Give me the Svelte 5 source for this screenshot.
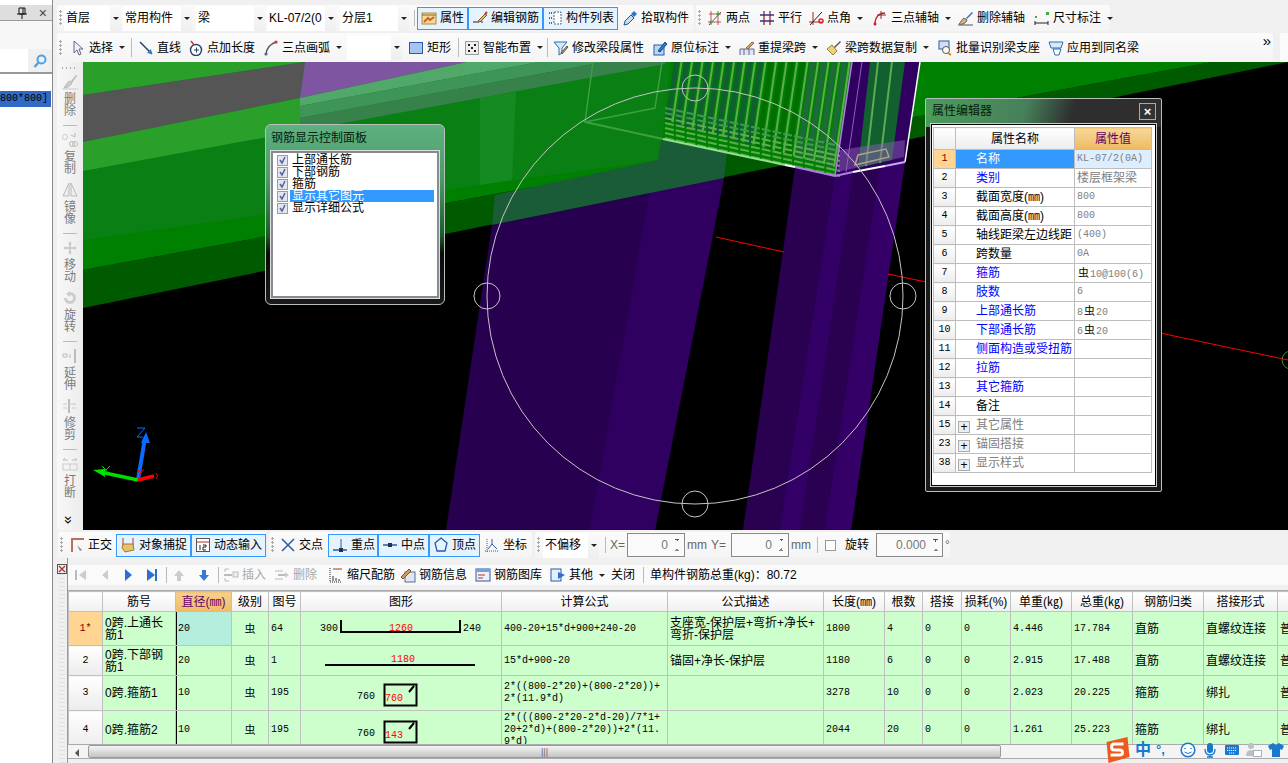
<script>
  const I = {
    attr: '<rect x="1" y="3" width="14" height="11" fill="#f3d99a" stroke="#b08a3c"/><path d="M1 5h14" stroke="#8a6a2a"/><path d="M3 12l4-4 2 2 4-3" stroke="#c8641e" stroke-width="2"/>',
    edit: '<path d="M1 12h6M9 12h2" stroke="#222"/><path d="M6 11l7-7 2 1-7 7z" fill="#e9b26a" stroke="#8a5a2a"/><path d="M13 4l2-2" stroke="#c33" stroke-width="2"/>',
    list: '<path d="M2 3h3M2 8h3M2 13h3" stroke="#567" stroke-width="2" stroke-dasharray="1 1"/><rect x="7" y="2" width="7" height="12" fill="#fff" stroke="#567" stroke-dasharray="2 1"/>',
    pick: '<path d="M2 15l1-4 6-6 3 3-6 6z" fill="#cde" stroke="#258"/><path d="M9 4l3-3 3 3-3 3z" fill="#2a78c8"/>',
    two: '<path d="M2 4h12M1 12h13M4 1v14M11 1v14" stroke="#a33" stroke-width=".8"/><path d="M2 15L14 2" stroke="#555"/><circle cx="4" cy="12" r="1.6" fill="#4a3"/><circle cx="11" cy="4" r="1.6" fill="#4a3"/>',
    para: '<path d="M5 1v14M11 1v14" stroke="#a22" stroke-width="1.3"/><path d="M1 5h14M1 11h14" stroke="#338" stroke-width="1.3"/>',
    angle: '<path d="M1 12h14M5 2v13" stroke="#a22"/><path d="M2 15L14 2" stroke="#222"/><circle cx="13" cy="11" r="2" fill="none" stroke="#d22" stroke-width="1.5"/>',
    arc3: '<path d="M3 14C3 7 7 3 13 3" fill="none" stroke="#c22" stroke-width="1.4"/><path d="M9 1v8M5 5h9" stroke="#833"/><circle cx="3" cy="14" r="1.5" fill="#c22"/>',
    brush: '<path d="M1 14c4 1 7-1 8-4l-3-2c-2 1-3 4-5 6z" fill="#d8b078" stroke="#665"/><path d="M8 8l6-6 1 1-6 6z" fill="#3a6fb0"/><path d="M0 15h15" stroke="#555"/>',
    dim: '<path d="M1 11v4M14 11v4M1 13h13" stroke="#222"/><rect x="1" y="6" width="2" height="2" fill="#4a4"/><rect x="12" y="2" width="3" height="3" fill="#4a4"/>',
    cursor: '<path d="M4 1v12l3-3 2 5 2-1-2-5h4z" fill="#eef" stroke="#668"/>',
    line: '<path d="M2 2l12 12" stroke="#246" stroke-width="1.5"/><path d="M14 14l-5-1 4-4z" fill="#2a78c8"/>',
    plus: '<circle cx="8" cy="10" r="5.5" fill="#fff" stroke="#246" stroke-width="1.4"/><path d="M6 10h5M8.5 7.5v5" stroke="#246"/><path d="M3 1l3 4" stroke="#c33" stroke-width="1.4"/>',
    arc: '<path d="M3 15C3 9 7 4 13 2" fill="none" stroke="#555" stroke-width="1.6"/><circle cx="3" cy="14" r="1.6" fill="#3a6fb0"/><circle cx="13" cy="2" r="1.6" fill="#c33"/>',
    rect: '<rect x="1.5" y="2.5" width="13" height="11" fill="#a8c4ee" stroke="#2a5aa8"/>',
    smart: '<rect x="1.5" y="1.5" width="13" height="13" fill="#eee" stroke="#444" stroke-dasharray="1 1"/><path d="M4 4h2v2H4zM10 4h2v2h-2zM4 10h2v2H4zM10 10h2v2h-2zM7 7h2v2H7z" fill="#222"/>',
    filter: '<path d="M1 2h13L9 8v5l-3 2V8z" fill="#d8eafa" stroke="#2a6fb0"/><path d="M8 13l6-7 1 1-6 7z" fill="#d8a050" stroke="#654"/>',
    doc: '<rect x="2" y="5" width="10" height="10" fill="#bcd6f4" stroke="#2a5aa8"/><path d="M6 11l7-9 2 2-7 8z" fill="#2a78c8" stroke="#158"/>',
    rail: '<path d="M1 15V9h14v6M5 15V9M10 15V9" fill="#dce6f4" stroke="#668"/><path d="M7 8l6-6 2 1-6 6z" fill="#e0a860" stroke="#865"/>',
    broom: '<path d="M1 9l5-4 5 6-4 4z" fill="#ecd27a" stroke="#9a8030"/><path d="M8 7l6-6 1 1-6 6z" fill="#555"/>',
    mag: '<rect x="2" y="1" width="10" height="8" fill="#cfe0f4" stroke="#2a5aa8"/><circle cx="9" cy="10" r="3.5" fill="#fff" stroke="#555"/><path d="M11 13l3 2" stroke="#c80" stroke-width="2"/>',
    app: '<path d="M1 2h14l-2 6H3z" fill="#d8eafa" stroke="#2a6fb0"/><path d="M5 9h8l-2 6H7z" fill="#fff" stroke="#2a6fb0"/>',
    ortho: '<path d="M3 15V2h12" fill="none" stroke="#b87060" stroke-width="2"/><path d="M8 8l5 5-2 1z" fill="#889"/>',
    snap: '<path d="M3 1v7M13 1v7" stroke="#a33"/><path d="M3 7l10 0 1 6-9 2-3-4z" fill="#e8c070" stroke="#a07a30"/>',
    dyn: '<rect x="1.5" y="1.5" width="13" height="13" fill="#fff" stroke="#555"/><path d="M1 5h14" stroke="#a33"/><path d="M5 8v5M8 8h3v2H8v3h3" fill="none" stroke="#222"/>',
    cross: '<path d="M2 2l12 12M14 2L2 14" stroke="#2a5aa8" stroke-width="1.5"/>',
    perp: '<path d="M1 13h14" stroke="#2a5aa8" stroke-width="1.5"/><path d="M9 2v11" stroke="#2a5aa8"/><rect x="7" y="11" width="4" height="4" fill="#234"/>',
    mid: '<path d="M1 8h14" stroke="#2a5aa8" stroke-width="1.5"/><rect x="6" y="6" width="4" height="4" fill="#234"/>',
    vertex: '<path d="M8 1l6 5-2 8H4L2 6z" fill="#e5f3ff" stroke="#2a5aa8" stroke-width="1.3"/>',
    coord: '<path d="M1 14h14M3 15V2" stroke="#2a5aa8" stroke-dasharray="1 1"/><path d="M4 12l4-5 5 5M8 7V2" fill="none" stroke="#2a5aa8"/>',
    first: '<path d="M3 3v10" stroke="#bbb" stroke-width="2"/><path d="M13 3v10L6 8z" fill="#ccc"/>',
    prev: '<path d="M11 3v10L5 8z" fill="#ccc"/>',
    next: '<path d="M5 2v12l7-6z" fill="#2a6fd0"/>',
    last: '<path d="M3 2v12l8-6z" fill="#2a6fd0"/><path d="M12 2v12" stroke="#2a6fd0" stroke-width="2"/>',
    up: '<path d="M8 3l5 6h-3v5H6V9H3z" fill="#ccc"/>',
    down: '<path d="M8 14l5-6h-3V3H6v5H3z" fill="#3a78d8"/>',
    ins: '<path d="M2 2h4M2 14h4M2 2v3M2 14v-3" stroke="#bbb"/><path d="M1 8h8" stroke="#bbb" stroke-width="2"/><rect x="10" y="5" width="5" height="5" fill="#eee" stroke="#bbb"/>',
    del: '<path d="M1 4h8M1 12h8" stroke="#bbb"/><path d="M4 8h7" stroke="#bbb" stroke-width="2"/><path d="M11 5l4 3-4 3z" fill="#ccc"/>',
    scale: '<path d="M2 1v14h12" fill="none" stroke="#222" stroke-dasharray="1 1"/><path d="M5 14V9M8 14V11M11 14v-2" stroke="#333"/><path d="M5 2h9" stroke="#a33"/>',
    info: '<rect x="5" y="5" width="10" height="10" fill="#dde8f6" stroke="#668"/><path d="M1 10l8-8 2 2-8 8z" fill="#d89a50" stroke="#754"/>',
    lib: '<rect x="1" y="2" width="14" height="12" fill="#eef2f8" stroke="#2a5aa8"/><rect x="1" y="2" width="14" height="3" fill="#7aa0d8"/><path d="M3 8h7M3 11h5" stroke="#a33"/>',
    other: '<rect x="1" y="2" width="10" height="12" fill="#e8eef8" stroke="#2a5aa8"/><path d="M8 5l7 3-7 4z" fill="#2a6fd0"/>',
    erase: '<path d="M2 14c4 0 6-2 8-5l-2-2c-3 1-4 4-6 7z" fill="#ccc" stroke="#bbb"/><path d="M9 7l5-6 1 1-5 7z" fill="#bbb"/><path d="M0 15h16" stroke="#ccc"/>',
    copy: '<circle cx="3" cy="5" r="2.5" fill="none" stroke="#ccc"/><circle cx="10" cy="12" r="2.5" fill="none" stroke="#bbb"/><circle cx="13" cy="12" r="2.5" fill="none" stroke="#bbb"/><path d="M9 3l4 2M13 1v4" stroke="#bbb"/>',
    mirror: '<path d="M7 1L1 14h6zM9 1l6 13H9z" fill="#eee" stroke="#bbb"/>',
    move: '<path d="M8 1l2 3H9v3h3V6l3 2-3 2V9H9v3h1l-2 3-2-3h1V9H4v1L1 8l3-2v1h3V4H6z" fill="#ccc"/>',
    rotate: '<path d="M8 2a6 6 0 1 1-6 6h3a3 3 0 1 0 3-3v2L4 4l4-3z" fill="#ccc"/>',
    extend: '<path d="M13 1v14" stroke="#bbb" stroke-width="2"/><path d="M1 6h4v3H1zM7 7h2M7 9h2" fill="none" stroke="#bbb"/>',
    trim: '<path d="M7 1v14" stroke="#bbb" stroke-width="2"/><path d="M1 6h12M1 10h5M10 6h5M10 10h5" stroke="#ccc" stroke-dasharray="4 1"/>',
    cut: '<path d="M1 4h5M15 4h-5M1 4l2-2M15 4l-2-2" stroke="#bbb"/><rect x="1" y="8" width="14" height="6" fill="none" stroke="#ccc"/><path d="M8 8v6" stroke="#ccc"/>'
  };

  const row1a = [
    { sel: '首层', w: 59, box: 46 }, { sel: '常用构件', w: 73, box: 58 }, { sel: '梁', w: 71, box: 58 },
    { sel: 'KL-07/2(0', w: 73, box: 58 }, { sel: '分层1', w: 71, box: 58 }, { sep: 1, w: 6 },
    { icon: 'attr', text: '属性', w: 51, on: 1 }, { icon: 'edit', text: '编辑钢筋', w: 75, on: 1 },
    { icon: 'list', text: '构件列表', w: 75, on: 1 }, { icon: 'pick', text: '拾取构件', w: 76 }
  ];
  const row1b = [
    { icon: 'two', text: '两点', w: 52 }, { icon: 'para', text: '平行', w: 49 },
    { icon: 'angle', text: '点角', w: 64, arrow: 1 }, { icon: 'arc3', text: '三点辅轴', w: 86, arrow: 1 },
    { icon: 'brush', text: '删除辅轴', w: 76 }, { icon: 'dim', text: '尺寸标注', w: 80, arrow: 1 }
  ];
  const row2 = [
    { icon: 'cursor', text: '选择', w: 62, arrow: 1 }, { sep: 1, w: 6 }, { icon: 'line', text: '直线', w: 50 },
    { icon: 'plus', text: '点加长度', w: 75 }, { icon: 'arc', text: '三点画弧', w: 88, arrow: 1 },
    { sel: '', w: 57, box: 44 }, { icon: 'rect', text: '矩形', w: 51 }, { sep: 1, w: 5 },
    { icon: 'smart', text: '智能布置', w: 85, arrow: 1 }, { sep: 1, w: 4 }, { icon: 'filter', text: '修改梁段属性', w: 99 },
    { icon: 'doc', text: '原位标注', w: 87, arrow: 1 }, { icon: 'rail', text: '重提梁跨', w: 87, arrow: 1 },
    { icon: 'broom', text: '梁跨数据复制', w: 111, arrow: 1 }, { icon: 'mag', text: '批量识别梁支座', w: 111 },
    { icon: 'app', text: '应用到同名梁', w: 100 }
  ];
  const snapA = [
    { icon: 'ortho', text: '正交', w: 51 }, { icon: 'snap', text: '对象捕捉', w: 75, on: 1 }, { icon: 'dyn', text: '动态输入', w: 75, on: 1 }
  ];
  const snapB = [
    { icon: 'cross', text: '交点', w: 52 }, { icon: 'perp', text: '重点', w: 50, on: 1 }, { icon: 'mid', text: '中点', w: 51, on: 1 },
    { icon: 'vertex', text: '顶点', w: 51, on: 1 }, { icon: 'coord', text: '坐标', w: 52 }
  ];
  const rebarBar = [
    { icon: 'first', w: 26, mid: 1 }, { icon: 'prev', w: 22, mid: 1 }, { icon: 'next', w: 24, mid: 1 }, { icon: 'last', w: 24, mid: 1 },
    { sep: 1, w: 3 }, { icon: 'up', w: 24, mid: 1 }, { icon: 'down', w: 25, mid: 1 }, { sep: 1, w: 3 },
    { icon: 'ins', text: '插入', w: 51, off: 1 }, { icon: 'del', text: '删除', w: 54, off: 1 },
    { icon: 'scale', text: '缩尺配筋', w: 72 }, { icon: 'info', text: '钢筋信息', w: 75 }, { icon: 'lib', text: '钢筋图库', w: 75 },
    { icon: 'other', text: '其他', w: 61, arrow: 1 }, { text: '关闭', w: 33 }, { sep: 1, w: 6 }, { text: '单构件钢筋总重(kg)：80.72', w: 200 }
  ];
  const vtools = [
    { icon: 'erase', t: '删除', sep: 1 }, { icon: 'copy', t: '复制' }, { icon: 'mirror', t: '镜像', sep: 1 },
    { icon: 'move', t: '移动' }, { icon: 'rotate', t: '旋转', sep: 1 }, { icon: 'extend', t: '延伸' },
    { icon: 'trim', t: '修剪', sep: 1 }, { icon: 'cut', t: '打断' }
  ];

  const props = [
    ['名称', 'KL-07/2(0A)', 'psel'], ['类别', '楼层框架梁', 'pblue pcjk'], ['截面宽度(㎜)', '800', ''], ['截面高度(㎜)', '800', ''],
    ['轴线距梁左边线距', '(400)', ''], ['跨数量', '0A', ''], ['箍筋', '虫10@100(6)', 'pblue'], ['肢数', '6', 'pblue'],
    ['上部通长筋', '8虫20', 'pblue'], ['下部通长筋', '6虫20', 'pblue'], ['侧面构造或受扭筋', '', 'pblue'], ['拉筋', '', 'pblue'],
    ['其它箍筋', '', 'pblue'], ['备注', '', ''], ['其它属性', '', 'pgroup', 15], ['锚固搭接', '', 'pgroup', 23], ['显示样式', '', 'pgroup', 38]
  ];
  const checks = ['上部通长筋', '下部钢筋', '箍筋', '显示其它图元', '显示详细公式'];

  const cols = [34, 73, 56, 37, 32, 201, 166, 156, 61, 38, 39, 49, 61, 61, 71, 74, 60];
  const heads = ['', '筋号', '直径(㎜)', '级别', '图号', '图形', '计算公式', '公式描述', '长度(㎜)', '根数', '搭接', '损耗(%)', '单重(㎏)', '总重(㎏)', '钢筋归类', '搭接形式', ''];
  const rows = [
    { h: 33, n: '1*', name: '0跨.上通长\n筋1', d: '20', fig: 64, f: '400-20+15*d+900+240-20', desc: '支座宽-保护层+弯折+净长+\n弯折-保护层', len: 1800, c: 4, uw: '4.446', tw: '17.784', kind: '直筋', join: '直螺纹连接' },
    { h: 29, n: '2', name: '0跨.下部钢\n筋1', d: '20', fig: 1, f: '15*d+900-20', desc: '锚固+净长-保护层', len: 1180, c: 6, uw: '2.915', tw: '17.488', kind: '直筋', join: '直螺纹连接' },
    { h: 34, n: '3', name: '0跨.箍筋1', d: '10', fig: 195, f: '2*((800-2*20)+(800-2*20))+\n2*(11.9*d)', desc: '', len: 3278, c: 10, uw: '2.023', tw: '20.225', kind: '箍筋', join: '绑扎', red: '760' },
    { h: 38, n: '4', name: '0跨.箍筋2', d: '10', fig: 195, f: '2*(((800-2*20-2*d-20)/7*1+\n20+2*d)+(800-2*20))+2*(11.\n9*d)', desc: '', len: 2044, c: 20, uw: '1.261', tw: '25.223', kind: '箍筋', join: '绑扎', red: '143' }
  ];

  // rebar stripes of the beam seen from below
  const stripes = Array.from({ length: 17 }, (_, i) => {
    const x = 674 + i * 10.5;
    return { x, b: x - 9 - i * 0.4, y: 122 + i * 2.8, c: i < 9 ? '#0f5f30' : i < 13 ? '#006f00' : '#1f6a3a' };
  });
  const hoops = Array.from({ length: 7 }, (_, k) => 108 + k * 5);
</script>

{#snippet icon(n)}
  <svg class="ico" viewBox="0 0 16 16" fill="none">{@html I[n]}</svg>
{/snippet}

{#snippet tools(list)}
  {#each list as t}
    {#if t.sep}
      <span class="sep" style="width:{t.w}px"></span>
    {:else if t.sel !== undefined}
      <span class="sel" style="width:{t.w}px"><span class="selbox" style="width:{t.box}px">{t.sel}</span><span class="selarrow"></span></span>
    {:else}
      <span class="tool" class:on={t.on} class:off={t.off} class:mid={t.mid} style="width:{t.w}px">
        {#if t.icon}{@render icon(t.icon)}{/if}
        {#if t.text}<span>{t.text}</span>{/if}
        {#if t.arrow}<i class="caret"></i>{/if}
      </span>
    {/if}
  {/each}
{/snippet}

<div class="app">
  <aside class="side">
    <div class="dock-title"><span class="pin">
      <svg width="10" height="12" viewBox="0 0 10 12"><path d="M2 1h6v6H2zM0 7h10M5 7v5M6 1v6" stroke="#111" fill="none"/></svg>
    </span><span class="dock-x">×</span></div>
    <div class="dock-gap"></div>
    <div class="search">
      <span class="search-box"></span>
      <svg width="16" height="16" viewBox="0 0 16 16"><circle cx="9.5" cy="6.5" r="4" fill="none" stroke="#4aa3e8" stroke-width="2"/><path d="M6.5 9.5L2.5 14" stroke="#4aa3e8" stroke-width="2.4"/></svg>
    </div>
    <div class="tree"><div class="tree-sel">800*800]</div></div>
  </aside>

  <div class="main">
    <div class="bar-row first">
      <div class="group"><span class="grip"></span>{@render tools(row1a)}</div>
      <div class="group second"><span class="grip"></span>{@render tools(row1b)}</div>
    </div>
    <div class="bar-row">
      <div class="group wide">
        <span class="grip g2"></span>{@render tools(row2)}
        <span class="more">»</span>
      </div>
      <div class="stub"></div>
    </div>

    <div class="work">
      <div class="vbar">
        <span class="vgrip"></span>
        {#each vtools as v}
          <div class="vitem">
            {@render icon(v.icon)}
            <span class="vtext">{v.t}</span>
          </div>
          {#if v.sep}<span class="vsep"></span>{/if}
        {/each}
        <span class="vmore">»</span>
      </div>

      <div class="canvas">
        <svg class="scene" viewBox="83 62 1205 468" preserveAspectRatio="none">
          <rect x="83" y="62" width="1205" height="468" fill="#000" />
          <polygon points="83,308 1288,62 1288,48 83,270" fill="#005a00" />
          <polygon points="83,62 1288,62 1288,48 83,270" fill="#008000" />
          <polygon points="83,62 670,62 660,160 83,240" fill="#0a7f14" />
          <polygon points="480,98 516,92 512,180 480,185" fill="#148a20" />
          <polygon points="83,62 305,62 83,95" fill="#2a9f2a" />
          <polygon points="83,95 305,62 300,98 83,142" fill="#555" />
          <polygon points="83,142 300,98 300,131 83,171" fill="#2a9f2a" />
          <polygon points="305,62 467,62 300,98" fill="#7d55a0" />
          <polygon points="300,98 467,62 539,62 300,106" fill="#52a868" />
          <polygon points="300,106 539,62 604,62 300,118" fill="#3f9558" />
          <polygon points="300,118 604,62 665,62 665,64 300,131" fill="#37824b" />

          <polygon points="492,225 724,178 655,530 446,530" fill="#280050" />
          <polygon points="650,190 724,178 655,530 590,530" fill="#300060" />
          <polygon points="492,225 495,195 658,160 661,140 727,153 724,178" fill="#1a5c38" />
          <polygon points="795,167 835,176 905,162 851,530 743,530" fill="#2a0050" />
          <polygon points="835,176 853,172 800,530 780,530" fill="#320066" />
          <polygon points="880,167 905,162 851,530 825,530" fill="#340068" />

          <polygon points="672,62 852,62 835,176 785,165 663,139" fill="#008000" />
          {#each stripes as s}
            <polygon points="{s.x},62 {s.x + 5},62 {s.b + 5},{s.y} {s.b},{s.y}" fill={s.c} />
            <line x1={s.x + 7.5} y1="62" x2={s.b + 7.5} y2={s.y} stroke="#5cad52" stroke-width="2" />
          {/each}
          <polygon points="852,62 920,62 905,162 853,172 835,176" fill="#2f0060" />
          <polygon points="870,62 905,62 892,160 858,168" fill="#125f30" />
          <line x1="878" y1="62" x2="866" y2="166" stroke="#5cad52" stroke-width="2" />
          <line x1="892" y1="62" x2="880" y2="163" stroke="#5cad52" stroke-width="2" />
          <line x1="862" y1="62" x2="846" y2="172" stroke="#8a5cc0" />
          {#each hoops as y, k}
            <line x1="665" y1={y} x2="840" y2={y + 38} stroke={k < 2 ? '#3f9a4f' : '#5cad52'} stroke-width="2" stroke-dasharray="9 2" />
          {/each}
          <polygon points="840,150 905,140 904,157 838,172" fill="#8c60b4" fill-opacity=".5" />
          <path d="M855 165l3-10 28-6 3 8z" fill="none" stroke="#b0a088" stroke-width="1.5" />
          <line x1="852" y1="62" x2="835" y2="176" stroke="#b080e0" stroke-width="1.5" />
          <line x1="920" y1="62" x2="905" y2="162" stroke="#fff" stroke-width="1.5" />
          <path d="M593 62l-8 60 70-14 7-46" fill="none" stroke="#3aa040" stroke-width="1.5" />
          <line x1="585" y1="122" x2="663" y2="139" stroke="#3aa040" stroke-width="2" />
          <line x1="663" y1="139" x2="785" y2="165" stroke="#90e090" stroke-width="2" />
          <line x1="785" y1="165" x2="795" y2="167" stroke="#fff" stroke-width="2" />
          <polyline points="795,167 835,176 853,172" fill="none" stroke="#b080e0" stroke-width="2" />
          <line x1="853" y1="172" x2="885" y2="166" stroke="#fff" stroke-width="2" />
          <line x1="885" y1="166" x2="905" y2="162" stroke="#c8a8f0" stroke-width="2" />

          <g stroke="#f00" stroke-width="1">
            <line x1="716" y1="237" x2="784" y2="252" />
            <line x1="888" y1="274" x2="926" y2="282" />
            <line x1="1160" y1="333" x2="1288" y2="360" />
          </g>
          <circle cx="1291" cy="360" r="9" fill="none" stroke="#3a8a3a" />
          <g fill="none" stroke="#c4c4c4" stroke-width="1">
            <circle cx="695" cy="296" r="208" />
            <circle cx="695" cy="88" r="13" />
            <circle cx="487" cy="296" r="13" />
            <circle cx="903" cy="296" r="13" />
            <circle cx="695" cy="504" r="13" />
          </g>

          <path d="M138 480L145 438" stroke="#0a6cff" stroke-width="4" />
          <path d="M141 443l5-11 4 11z" fill="#0a6cff" />
          <path d="M137 428h8l-8 9h6" fill="none" stroke="#0a6cff" />
          <path d="M138 480L105 473" stroke="#00e000" stroke-width="3.5" />
          <path d="M105 469l-12 1 12 7z" fill="#00e000" />
          <path d="M102 466l4 4 4-4M106 470v2" fill="none" stroke="#00e000" />
          <path d="M138 480l16-4" stroke="#f00" stroke-width="3.5" />
          <path d="M137 469l4 4 3-4M141 473l-2 3M156 473q3 3 0 6" fill="none" stroke="#e00" />
        </svg>

        <section class="glass rebar-panel">
          <h4>钢筋显示控制面板</h4>
          <div class="checks">
            {#each checks as c, i}
              <label class="check" class:hot={i === 3}>
                <svg class="tick" viewBox="0 0 11 11"><rect x=".5" y=".5" width="10" height="10" fill="#e4e6ec" stroke="#9a9ca4"/><path d="M3 5l2 3 3-6" fill="none" stroke="#4a62a8" stroke-width="1.5"/></svg>
                <span>{c}</span>
              </label>
            {/each}
          </div>
        </section>

        <section class="glass prop-panel">
          <h4>属性编辑器</h4>
          <button class="close" aria-label="关闭">×</button>
          <div class="prop-body">
            <table class="props">
              <thead><tr><th class="pn"></th><th>属性名称</th><th class="pval">属性值</th></tr></thead>
              <tbody>
                {#each props as p, i}
                  <tr class={p[2]}>
                    <th class="pn">{p[3] ?? i + 1}</th>
                    <td class="pname">
                      {#if p[2] === 'pgroup'}<span class="expand">+</span>{/if}{p[0]}
                    </td>
                    <td class="pv">{#each p[1].split('虫') as part, j}{#if j > 0}<span class="sym">虫</span>{/if}{part}{/each}</td>
                  </tr>
                {/each}
              </tbody>
            </table>
          </div>
        </section>
      </div>
    </div>

    <div class="snapbar">
      <div class="group sg"><span class="grip"></span>{@render tools(snapA)}</div>
      <div class="group sg"><span class="grip"></span>{@render tools(snapB)}</div>
      <div class="group sg last">
        <span class="grip"></span>
        <span class="sel s3"><span class="selbox">不偏移</span><span class="selarrow"></span></span>
        <span class="sep s4"></span>
        <span class="lbl">X=</span><span class="spin w58">0<i></i></span><span class="lbl">mm</span>
        <span class="lbl y">Y=</span><span class="spin w58">0<i></i></span><span class="lbl">mm</span>
        <span class="sep s4"></span>
        <span class="box"></span><span class="lbl rot">旋转</span>
        <span class="spin w67">0.000<i></i></span><span class="lbl">°</span>
      </div>
    </div>

    <div class="bottom">
      <div class="strip">
        <svg class="strip-x" viewBox="0 0 10 10"><rect x=".5" y=".5" width="9" height="9" fill="#eee" stroke="#555"/><path d="M2 2l6 6M8 2L2 8" stroke="#a33" stroke-width="1.3"/></svg>
      </div>
      <div class="bottom-main">
        <div class="rebar-bar">{@render tools(rebarBar)}</div>
        <div class="grid-wrap">
          <table class="grid">
            <colgroup>{#each cols as w}<col style="width:{w}px" />{/each}</colgroup>
            <thead>
              <tr>{#each heads as h, i}<th class:hot={i === 2}>{h}</th>{/each}</tr>
            </thead>
            <tbody>
              {#each rows as r, i}
                <tr style="height:{r.h}px">
                  <th class:cur={i === 0}>{r.n}</th>
                  <td class="name">{r.name}</td>
                  <td class="num dia" class:cur={i === 0}>{r.d}</td>
                  <td class="ctr">虫</td>
                  <td class="num">{r.fig}</td>
                  <td class="fig">
                    {#if i === 0}
                      <svg viewBox="0 0 201 33" width="201" height="33">
                        <path d="M40 8v12h119V8" fill="none" stroke="#000" stroke-width="2" />
                        <text x="37" y="19" text-anchor="end">300</text>
                        <text x="162" y="19">240</text>
                        <text x="100" y="19" text-anchor="middle" class="red">1260</text>
                      </svg>
                    {:else if i === 1}
                      <svg viewBox="0 0 201 29" width="201" height="29">
                        <path d="M24 19h150" stroke="#000" stroke-width="2" />
                        <text x="102" y="16" text-anchor="middle" class="red">1180</text>
                      </svg>
                    {:else}
                      <svg viewBox="0 0 201 34" width="201" height="34">
                        <text x="56" y="23">760</text>
                        <path d="M83.500 8.500h32v21h-32zM108 16l5-6" fill="none" stroke="#000" stroke-width="2" />
                        <text x="84" y="25" class="red">{r.red}</text>
                      </svg>
                    {/if}
                  </td>
                  <td class="num f">{r.f}</td>
                  <td class="name">{r.desc}</td>
                  <td class="num">{r.len}</td>
                  <td class="num">{r.c}</td>
                  <td class="num">0</td>
                  <td class="num">0</td>
                  <td class="num">{r.uw}</td>
                  <td class="num">{r.tw}</td>
                  <td class="name">{r.kind}</td>
                  <td class="name">{r.join}</td>
                  <td class="name">普通</td>
                </tr>
              {/each}
            </tbody>
          </table>
        </div>
        <div class="hscroll">
          <span class="sb-left"></span>
          <span class="sb-thumb">|||</span>
        </div>
      </div>
    </div>
  </div>

  <div class="ime">
    <svg class="ime-s" viewBox="0 0 26 26"><path d="M2 5L23 0l2 20-21 6z" fill="#ee5a1e"/><path d="M19 7H10q-3 0-3 3t3 3h5q3 0 3 2.500T15 18H6" fill="none" stroke="#fff" stroke-width="3"/></svg>
    <span class="ime-zh">中</span>
    <span class="ime-dot">°,</span>
    <svg viewBox="0 0 16 16" class="ime-i"><circle cx="8" cy="8" r="6.800" fill="#fff" stroke="#1878d0" stroke-width="1.500"/><path d="M5 6v1M11 6v1" stroke="#1878d0" stroke-width="1.500"/><path d="M4.500 10q3.500 3 7 0" fill="none" stroke="#1878d0"/></svg>
    <svg viewBox="0 0 16 16" class="ime-i"><rect x="5" y="1" width="6" height="10" rx="3" fill="#1878d0"/><path d="M3 7q0 6 5 6t5-6M8 13v2M5 15h6" fill="none" stroke="#1878d0" stroke-width="1.300"/></svg>
    <svg viewBox="0 0 16 16" class="ime-i"><rect x="1" y="3" width="14" height="10" rx="1" fill="#1878d0"/><path d="M3 6h10M3 8.500h10M5 11h6" stroke="#fff" stroke-dasharray="1.200 .8"/></svg>
    <svg viewBox="0 0 16 16" class="ime-i"><circle cx="5" cy="4" r="3" fill="#b8c0c8"/><path d="M0 14q0-6 5-6t5 6z" fill="#b8c0c8"/><rect x="7.500" y="8.500" width="8" height="6" fill="#fff" stroke="#a8b0b8"/></svg>
    <svg viewBox="0 0 16 16" class="ime-i"><path d="M5 1L0 4l2 4 2-1v8h8V7l2 1 2-4-5-3-3 2z" fill="#1878d0"/></svg>
  </div>
</div>

<style>
  :global(body) {
    margin: 0;
    background: #f0f0f0;
  }

  .app {
    position: relative;
    display: flex;
    width: 1288px;
    height: 763px;
    overflow: hidden;
    background: #f0f0f0;
    color: #000;
    font: 12px/16px "Liberation Sans", "Noto Sans CJK SC", sans-serif;
  }

  /* left dock */
  .side {
    flex: none;
    box-sizing: border-box;
    width: 53px;
    padding-top: 5px;
    border-right: 1px solid #8a8a8a;
    display: flex;
    flex-direction: column;
    background: #fff;
  }
  .dock-title {
    height: 15px;
    background: #dedede;
    border-bottom: 1px solid #999;
    display: flex;
    align-items: center;
    justify-content: flex-end;
    gap: 12px;
    padding-right: 5px;
  }
  .dock-x {
    font-size: 14px;
    color: #444;
  }
  .pin {
    height: 12px;
    line-height: 0;
  }
  .dock-gap {
    height: 28px;
    background: #f7f7f7;
  }
  .search {
    height: 23px;
    display: flex;
    align-items: center;
    background: #f0f0f0;
    border-bottom: 2px solid #999;
  }
  .search-box {
    width: 28px;
    height: 23px;
    margin-right: 4px;
    background: #fff;
  }
  .tree {
    flex: 1;
    padding-top: 17px;
    background: #fff;
  }
  .tree-sel {
    width: 51px;
    height: 16px;
    background: #316ac5;
    font: 10px/16px "Liberation Mono", monospace;
    overflow: hidden;
  }

  .main {
    flex: 1;
    min-width: 0;
    display: flex;
    flex-direction: column;
  }

  /* toolbars */
  .bar-row {
    flex: none;
    display: flex;
    height: 29px;
    box-sizing: border-box;
    padding-left: 4px;
  }
  .bar-row.first {
    height: 33px;
    padding-top: 5px;
    padding-bottom: 2px;
  }
  .group {
    display: flex;
    align-items: center;
    background: linear-gradient(#fbfbfb, #f4f4f4);
    border-radius: 3px;
  }
  .group.second {
    margin-left: 2px;
  }
  .group.wide {
    flex: 1;
    margin-right: 7px;
    position: relative;
  }
  .stub {
    width: 8px;
    background: #fafafa;
  }
  .more {
    position: absolute;
    right: 2px;
    top: 0;
    font: 15px/16px "Liberation Sans", sans-serif;
  }
  .grip {
    flex: none;
    width: 7px;
    height: 16px;
    background: radial-gradient(circle at 1.500px 1.500px, #aaa 1px, transparent 1.200px) 2px 0 / 3px 4px repeat-y;
  }
  .grip.g2 {
    width: 9px;
  }
  .tool {
    flex: none;
    display: inline-flex;
    align-items: center;
    box-sizing: border-box;
    height: 23px;
    padding-left: 4px;
    gap: 3px;
    white-space: nowrap;
  }
  .tool.on {
    background: #e5f3ff;
    outline: 1.500px solid #3399ff;
    outline-offset: -1px;
  }
  .tool.off {
    color: #a8a8a8;
  }
  .tool.mid {
    padding-left: 0;
    justify-content: center;
  }
  .ico {
    flex: none;
    width: 16px;
    height: 16px;
  }
  .caret {
    margin-left: 3px;
    border: 3px solid transparent;
    border-top: 3px solid #222;
    border-bottom: 0;
  }
  .sep {
    flex: none;
    position: relative;
    align-self: stretch;
  }
  .sep::after {
    content: "";
    position: absolute;
    left: 50%;
    top: 5px;
    bottom: 5px;
    border-left: 1px solid #bbb;
  }
  .sel {
    flex: none;
    display: inline-flex;
    height: 25px;
    white-space: nowrap;
  }
  .selbox {
    overflow: hidden;
    padding-left: 2px;
    box-sizing: border-box;
    background: #fff;
    line-height: 25px;
  }
  .selarrow {
    width: 11px;
    background: linear-gradient(#fafafa, #eee);
    position: relative;
  }
  .selarrow::after {
    content: "";
    position: absolute;
    left: 3px;
    top: 11px;
    border: 3px solid transparent;
    border-top: 3px solid #222;
    border-bottom: 0;
  }

  /* work area */
  .work {
    flex: none;
    height: 468px;
    display: flex;
    padding-left: 4px;
  }
  .vbar {
    flex: none;
    position: relative;
    box-sizing: border-box;
    width: 26px;
    border-radius: 3px;
    background: linear-gradient(90deg, #f8f8f8, #ececec);
    display: flex;
    flex-direction: column;
    align-items: center;
    padding-top: 12px;
  }
  .vgrip {
    position: absolute;
    top: 5px;
    left: 5px;
    width: 16px;
    height: 2px;
    background: repeating-linear-gradient(90deg, #aaa 0 1px, transparent 1px 4px);
  }
  .vitem {
    flex: none;
    height: 50px;
    width: 26px;
    display: flex;
    flex-direction: column;
    align-items: center;
    gap: 3px;
  }
  .vtext {
    width: 12px;
    line-height: 12px;
    color: #7b7b7b;
    text-align: center;
  }
  .vsep {
    flex: none;
    width: 14px;
    height: 7px;
    border-top: 1px solid #bbb;
    box-sizing: border-box;
    margin-top: 1px;
  }
  .vmore {
    position: absolute;
    bottom: 2px;
    left: 8px;
    transform: rotate(90deg);
    font-size: 15px;
  }
  .canvas {
    flex: 1;
    position: relative;
    overflow: hidden;
    background: #000;
  }
  .scene {
    display: block;
    width: 100%;
    height: 100%;
  }

  /* floating panels */
  .glass {
    position: absolute;
    box-sizing: border-box;
    border: 1px solid #b8c0bc;
    border-radius: 6px;
  }
  .glass h4 {
    margin: 0;
    font-weight: normal;
    font-size: 12px;
    color: #06200c;
    line-height: 16px;
  }
  .rebar-panel {
    left: 182px;
    top: 62px;
    width: 180px;
    height: 181px;
    padding: 5px 5px 0 5px;
    background: linear-gradient(#5fb080 0, #4a9d6a 30%, #1c5a2a 62%, #0a0a0a 72%, #1a1a1a 100%);
  }
  .checks {
    margin-top: 5px;
    box-sizing: border-box;
    height: 147px;
    padding: 1px 0 0 4px;
    background: #fff;
    border: 2px solid #868a92;
    box-shadow: 0 0 0 1px #ddd;
  }
  .check {
    display: flex;
    align-items: center;
    height: 12px;
    line-height: 12px;
    white-space: nowrap;
    margin-right: 3px;
  }
  .check span {
    flex: 1;
    padding-left: 2px;
    margin-left: 2px;
    height: 12px;
  }
  .check.hot span {
    background: #3399ff;
    color: #fff;
  }
  .tick {
    flex: none;
    width: 11px;
    height: 11px;
  }
  .prop-panel {
    left: 842px;
    top: 36px;
    width: 237px;
    height: 394px;
    border-radius: 2px;
    padding: 4px 4px 0 4px;
    background: linear-gradient(105deg, #4d9c5c 0, #47805a 42%, #2e2e2e 62%, #2e2e2e 100%) 0 0 / 100% 28px no-repeat, #1a1a1a;
  }
  .prop-panel h4 {
    padding-left: 2px;
    height: 20px;
  }
  .close {
    position: absolute;
    top: 4px;
    right: 5px;
    width: 17px;
    height: 17px;
    padding: 0;
    border: 1px solid #aaa;
    background: #333;
    color: #fff;
    font: bold 13px/14px "Liberation Sans", sans-serif;
  }
  .prop-body {
    box-sizing: border-box;
    height: 364px;
    padding: 3px 2px;
    background: #fff;
    border: 1px solid #ccc;
    outline: 1px solid #000;
    outline-offset: -2px;
  }
  .props {
    width: 219px;
    table-layout: fixed;
    border-collapse: collapse;
    font-size: 12px;
    line-height: 14px;
  }
  .props th,
  .props td {
    border: 1px solid #bdbdbd;
    padding: 0;
    height: 18px;
    font-weight: normal;
    white-space: nowrap;
    overflow: hidden;
  }
  .props thead th {
    height: 21px;
    background: linear-gradient(#fff, #ececec);
  }
  .props .pn {
    width: 21px;
    background: linear-gradient(#fff, #ececec);
    font: 10px/14px "Liberation Mono", monospace;
  }
  .props thead .pval {
    width: 76px;
    color: #660066;
    background: linear-gradient(#f5d89a, #f0ba62);
  }
  .props .pname {
    padding-left: 20px;
  }
  .props .pv {
    padding-left: 2px;
    color: #808080;
    font: 10px/14px "Liberation Mono", "Noto Sans CJK SC", monospace;
  }
  .props .pcjk .pv {
    font: 12px/14px "Liberation Sans", "Noto Sans CJK SC", sans-serif;
  }
  .sym {
    font: 11px/14px "Noto Sans CJK SC", sans-serif;
    color: #000;
    margin: 0 1px;
  }
  .props .pblue .pname {
    color: #0000ff;
  }
  .props .pgroup .pname {
    color: #808080;
    padding-left: 2px;
  }
  .expand {
    display: inline-block;
    box-sizing: border-box;
    width: 12px;
    height: 12px;
    margin-right: 6px;
    border: 1px solid #aaa;
    background: #eee;
    color: #000;
    font: 12px/10px "Liberation Sans", sans-serif;
    text-align: center;
    vertical-align: -2px;
  }
  .props .psel .pname {
    background: #3399ff;
    color: #fff;
  }
  .props .psel .pv {
    background: #ddeeff;
  }
  .props .psel .pn {
    background: #ffd591;
    color: #7a0000;
  }

  /* snap bar */
  .snapbar {
    flex: none;
    display: flex;
    height: 28px;
    box-sizing: border-box;
    padding: 2px 0 0 5px;
  }
  .sg {
    margin-right: 3px;
    height: 26px;
  }
  .sg.last .grip {
    margin-right: 1px;
  }
  .s3 .selbox {
    width: 45px;
  }
  .s4 {
    width: 11px;
  }
  .lbl {
    color: #666;
    white-space: nowrap;
  }
  .lbl.y {
    margin-left: 4px;
    margin-right: 3px;
  }
  .lbl.rot {
    margin: 0 5px 0 9px;
    color: #000;
  }
  .spin {
    box-sizing: border-box;
    height: 24px;
    margin: 0 2px;
    padding-right: 16px;
    line-height: 22px;
    text-align: right;
    color: #777;
    border: 1px solid #888;
    background: #fafafa;
    position: relative;
  }
  .spin i {
    position: absolute;
    right: 4px;
    top: 5px;
    width: 5px;
    height: 12px;
    background:
      linear-gradient(45deg, transparent 50%, #555 50%) 0 0 / 3px 3px no-repeat,
      linear-gradient(-45deg, transparent 50%, #555 50%) 2px 0 / 3px 3px no-repeat,
      linear-gradient(135deg, transparent 50%, #888 50%) 0 9px / 3px 3px no-repeat,
      linear-gradient(-135deg, transparent 50%, #888 50%) 2px 9px / 3px 3px no-repeat;
  }
  .w58 {
    width: 58px;
  }
  .w67 {
    width: 67px;
  }
  .box {
    width: 11px;
    height: 11px;
    border: 1px solid #999;
    background: #fff;
    box-sizing: border-box;
    margin-left: 3px;
  }

  /* rebar table */
  .bottom {
    flex: 1;
    min-height: 0;
    display: flex;
    padding-left: 4px;
  }
  .strip {
    flex: none;
    position: relative;
    width: 10px;
    margin-top: 6px;
    background: repeating-linear-gradient(#e0e0e0 0 1px, transparent 1px 4px) 2px 10px / 6px 100% no-repeat;
  }
  .strip-x {
    position: absolute;
    left: 0;
    top: 0;
    width: 10px;
    height: 10px;
  }
  .bottom-main {
    flex: 1;
    min-width: 0;
    display: flex;
    flex-direction: column;
    border-left: 1px solid #999;
  }
  .rebar-bar {
    flex: none;
    display: flex;
    align-items: center;
    height: 20px;
    margin: 7px 0 5px;
    background: #fafafa;
  }
  .rebar-bar :global(.sep::after) {
    top: 2px;
    bottom: 2px;
  }
  .grid-wrap {
    flex: none;
    height: 154px;
    overflow: hidden;
    border-top: 1px solid #aaa;
    box-sizing: border-box;
  }
  .grid {
    table-layout: fixed;
    width: 1209px;
    border-collapse: collapse;
    font-size: 12px;
    line-height: 12px;
  }
  .grid th,
  .grid td {
    border: 1px solid #c0c0c0;
    padding: 0;
    font-weight: normal;
    overflow: hidden;
    white-space: pre-line;
  }
  .grid thead th {
    height: 19px;
    background: linear-gradient(#fff, #f0f0f0);
  }
  .grid thead th.hot {
    background: linear-gradient(#f5d08c, #f0bc68);
    color: #660066;
  }
  .grid tbody th {
    background: linear-gradient(#fff, #ececec);
    font: 10px/12px "Liberation Mono", monospace;
  }
  .grid tbody th.cur {
    background: #ffd591;
    color: #7a0000;
  }
  .grid tbody td {
    background: #ccffcc;
    padding-left: 2px;
  }
  .grid td.num {
    font: 10px/12px "Liberation Mono", monospace;
    white-space: pre;
  }
  .grid td.dia {
    box-shadow: inset 1px 0 #000;
  }
  .grid td.dia.cur {
    background: #b3efdc;
  }
  .grid td.ctr {
    text-align: center;
    padding-left: 0;
    font-size: 11px;
  }
  .grid td.fig {
    padding: 0;
    line-height: 0;
  }
  .fig text {
    font: 10px "Liberation Mono", monospace;
  }
  .fig .red {
    fill: #f00;
  }

  .hscroll {
    flex: none;
    position: relative;
    height: 15px;
    background: #f4f4f4;
    border: 1px solid #aaa;
    border-width: 1px 0;
    box-sizing: border-box;
  }
  .sb-left {
    position: absolute;
    left: 7px;
    top: 4px;
    border: 4px solid transparent;
    border-right: 4px solid #555;
    border-left: 0;
  }
  .sb-thumb {
    position: absolute;
    left: 20px;
    top: 0;
    width: 913px;
    height: 13px;
    text-align: center;
    font-size: 9px;
    line-height: 13px;
    color: #666;
    background: linear-gradient(#f4f4f4, #c4c4c4);
    border: 1px solid #999;
    box-sizing: border-box;
    border-radius: 2px;
  }

  /* input method strip */
  .ime {
    position: absolute;
    left: 1104px;
    top: 737px;
    display: flex;
    align-items: center;
    height: 26px;
    gap: 0;
  }
  .ime-s {
    width: 27px;
    height: 26px;
  }
  .ime-zh {
    width: 19px;
    margin-left: 4px;
    color: #1878d0;
    font-size: 16px;
    font-weight: bold;
  }
  .ime-dot {
    width: 24px;
    margin-left: 2px;
    color: #1878d0;
    font-size: 13px;
    font-weight: bold;
  }
  .ime-i {
    width: 16px;
    height: 16px;
    margin-right: 6px;
  }
</style>
